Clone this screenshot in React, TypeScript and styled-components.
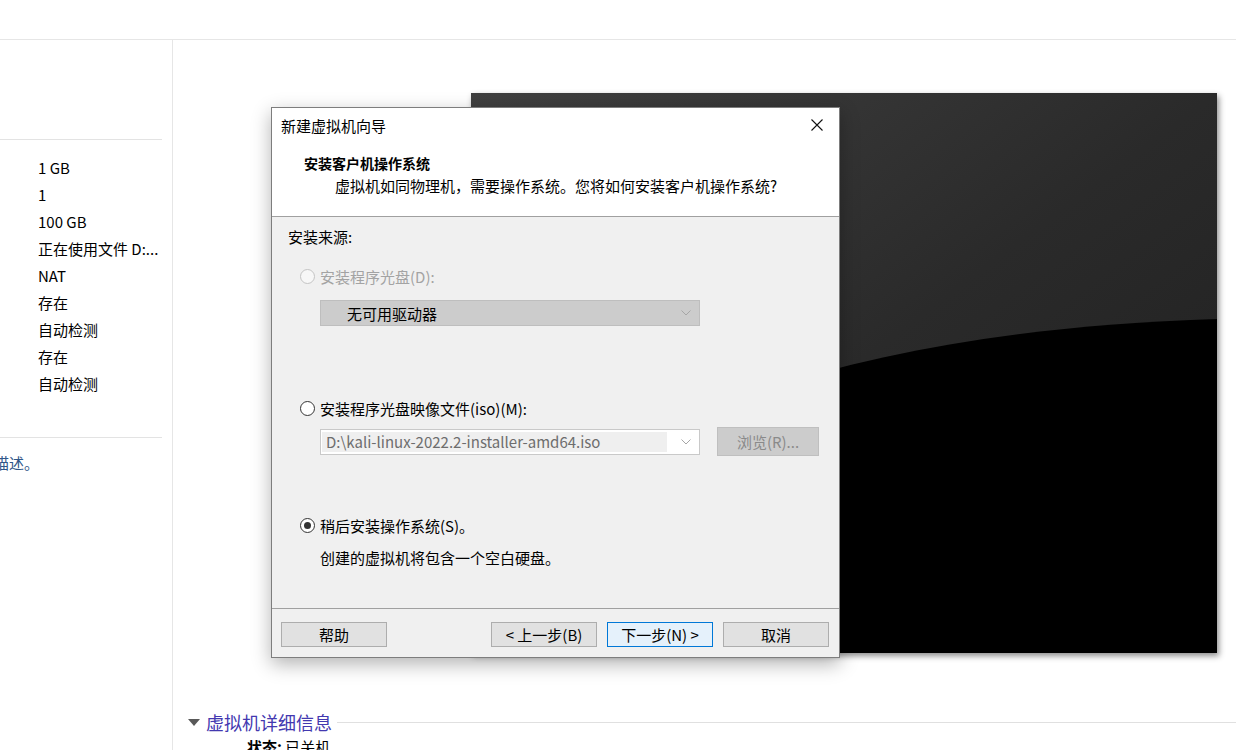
import styled, { createGlobalStyle } from 'styled-components';

const GlobalStyle = createGlobalStyle`
    html, body {
        margin: 0;
        padding: 0;
        background: #ffffff;
        overflow: hidden;
    }
    body {
        width: 1236px;
        height: 750px;
        font-family: "Noto Sans CJK SC", "Noto Sans", sans-serif;
        font-size: 15px;
        color: #000;
    }
`;

const summaryValues = [
    '1 GB',
    '1',
    '100 GB',
    '正在使用文件 D:...',
    'NAT',
    '存在',
    '自动检测',
    '存在',
    '自动检测',
];

function App() {
    return (
        <>
            <GlobalStyle />
            <Page>
                <TopBar />
                <Content>
                    <SidePanel>
                        <SideRule />
                        <ValueList>
                            {summaryValues.map((v, i) => (
                                <ValueRow key={i}>{v}</ValueRow>
                            ))}
                        </ValueList>
                        <SideRule />
                        <Hint>描述。</Hint>
                    </SidePanel>

                    <Main>
                        <Preview>
                            <PreviewArt />
                        </Preview>

                        <Details>
                            <DetailsHead>
                                <Caret viewBox="0 0 12 7">
                                    <polygon points="0,0 12,0 6,7" fill="#595959" />
                                </Caret>
                                <DetailsTitle>虚拟机详细信息</DetailsTitle>
                                <HeadLine />
                            </DetailsHead>
                            <StatusRow>
                                <b>状态:</b> 已关机
                            </StatusRow>
                        </Details>

                        <Dialog>
                            <TitleBar>
                                <span>新建虚拟机向导</span>
                                <CloseIcon viewBox="0 0 12 12">
                                    <path d="M0.5 0.5 L11.5 11.5 M11.5 0.5 L0.5 11.5" stroke="#111" strokeWidth="1.1" />
                                </CloseIcon>
                            </TitleBar>
                            <Header>
                                <HeaderTitle>安装客户机操作系统</HeaderTitle>
                                <HeaderText>虚拟机如同物理机，需要操作系统。您将如何安装客户机操作系统?</HeaderText>
                            </Header>

                            <Body>
                                <SourceLabel>安装来源:</SourceLabel>

                                <RadioRow $gap={19} $disabled>
                                    <Radio $disabled />
                                    安装程序光盘(D):
                                </RadioRow>
                                <ComboRow $gap={14}>
                                    <Combo $disabled>
                                        <ComboText $disabled>无可用驱动器</ComboText>
                                        <Chevron />
                                    </Combo>
                                </ComboRow>

                                <RadioRow $gap={72}>
                                    <Radio />
                                    安装程序光盘映像文件(iso)(M):
                                </RadioRow>
                                <ComboRow $gap={9}>
                                    <Combo>
                                        <ComboText>D:\kali-linux-2022.2-installer-amd64.iso</ComboText>
                                        <Chevron />
                                    </Combo>
                                    <BrowseButton>浏览(R)...</BrowseButton>
                                </ComboRow>

                                <RadioRow $gap={59}>
                                    <Radio $checked />
                                    稍后安装操作系统(S)。
                                </RadioRow>
                                <Note>创建的虚拟机将包含一个空白硬盘。</Note>
                            </Body>

                            <Footer>
                                <Button>帮助</Button>
                                <Spacer />
                                <Button>&lt; 上一步(B)</Button>
                                <Button $primary>下一步(N) &gt;</Button>
                                <Button>取消</Button>
                            </Footer>
                        </Dialog>
                    </Main>
                </Content>
            </Page>
        </>
    );
}

function PreviewArt() {
    return (
        <PreviewSvg viewBox="0 0 746 560" preserveAspectRatio="none">
            <defs>
                <linearGradient id="screen" x1="0" y1="0" x2="1" y2="1">
                    <stop offset="0" stopColor="#404040" />
                    <stop offset="0.5" stopColor="#2a2a2a" />
                    <stop offset="1" stopColor="#1e1e1e" />
                </linearGradient>
            </defs>
            <rect width="746" height="560" fill="url(#screen)" />
            <path d="M0 455 C 170 310 420 236 746 226 L746 560 L0 560 Z" fill="#000" />
        </PreviewSvg>
    );
}

function Chevron() {
    return (
        <ChevronSvg viewBox="0 0 10 6">
            <polyline points="0.5,0.5 5,5 9.5,0.5" fill="none" stroke="#a6a6a6" strokeWidth="1" />
        </ChevronSvg>
    );
}

const Page = styled.div`
    width: 1236px;
    height: 750px;
    display: flex;
    flex-direction: column;
    overflow: hidden;
`;

const TopBar = styled.div`
    height: 39px;
    flex-shrink: 0;
    border-bottom: 1px solid #e6e6e6;
`;

const Content = styled.div`
    flex: 1;
    display: flex;
    min-height: 0;
`;

const SidePanel = styled.aside`
    width: 173px;
    flex-shrink: 0;
    box-sizing: border-box;
    border-right: 1px solid #e6e6e6;
    padding-top: 99px;
`;

const SideRule = styled.div`
    height: 1px;
    width: 162px;
    background: #e3e3e3;
`;

const ValueList = styled.div`
    padding: 14px 0 40px 38px;
`;

const ValueRow = styled.div`
    height: 27px;
    line-height: 27px;
    font-size: 15px;
    white-space: nowrap;
    overflow: hidden;
`;

const Hint = styled.div`
    margin-top: 15px;
    margin-left: -6px;
    font-size: 15px;
    line-height: 20px;
    color: #2f5688;
    white-space: nowrap;
`;

const Main = styled.main`
    flex: 1;
    position: relative;
    padding-top: 53px;
    display: flex;
    flex-direction: column;
`;

const Preview = styled.div`
    margin-left: 298px;
    width: 746px;
    height: 560px;
    flex-shrink: 0;
    box-shadow: 2px 3px 6px rgba(0, 0, 0, 0.45);
`;

const PreviewSvg = styled.svg`
    display: block;
    width: 100%;
    height: 100%;
`;

const Details = styled.section`
    margin-top: 57px;
    padding-left: 15px;
`;

const DetailsHead = styled.div`
    display: flex;
    align-items: center;
    height: 24px;
`;

const Caret = styled.svg`
    width: 12px;
    height: 7px;
    margin-right: 6px;
`;

const DetailsTitle = styled.div`
    font-size: 18px;
    line-height: 24px;
    color: #4338b0;
    white-space: nowrap;
`;

const HeadLine = styled.div`
    flex: 1;
    height: 1px;
    background: #e0e0e0;
    margin-left: 5px;
`;

const StatusRow = styled.div`
    padding-left: 59px;
    margin-top: 2px;
    font-size: 15px;
    line-height: 22px;
`;

const Dialog = styled.div`
    position: absolute;
    left: 98px;
    top: 67px;
    width: 569px;
    height: 551px;
    box-sizing: border-box;
    border: 1px solid #7d7d7d;
    background: #f0f0f0;
    display: flex;
    flex-direction: column;
    box-shadow: 0 6px 18px rgba(0, 0, 0, 0.3);
`;

const TitleBar = styled.div`
    height: 38px;
    flex-shrink: 0;
    box-sizing: border-box;
    background: #fff;
    display: flex;
    align-items: center;
    justify-content: space-between;
    padding: 0 16px 4px 9px;
    font-size: 15px;
`;

const CloseIcon = styled.svg`
    width: 12px;
    height: 12px;
`;

const Header = styled.div`
    height: 71px;
    flex-shrink: 0;
    box-sizing: border-box;
    background: #fff;
    border-bottom: 1px solid #a0a0a0;
    padding-top: 7px;
`;

const HeaderTitle = styled.div`
    padding-left: 32px;
    font-size: 14px;
    font-weight: 700;
    line-height: 20px;
`;

const HeaderText = styled.div`
    padding-left: 63px;
    margin-top: 3px;
    font-size: 15px;
    line-height: 20px;
    white-space: nowrap;
`;

const Body = styled.div`
    flex: 1;
    padding: 10px 0 0 16px;
    display: flex;
    flex-direction: column;
`;

const SourceLabel = styled.div`
    font-size: 15px;
    line-height: 20px;
`;

const RadioRow = styled.div<{ $gap: number; $disabled?: boolean }>`
    display: flex;
    align-items: center;
    height: 20px;
    margin-top: ${(p) => p.$gap}px;
    padding-left: 12px;
    gap: 5px;
    font-size: 15px;
    color: ${(p) => (p.$disabled ? '#a3a3a3' : '#000')};
    white-space: nowrap;
`;

const Radio = styled.span<{ $disabled?: boolean; $checked?: boolean }>`
    width: 15px;
    height: 15px;
    box-sizing: border-box;
    border-radius: 50%;
    border: 1px solid ${(p) => (p.$disabled ? '#c4c4c4' : '#333')};
    background: ${(p) => (p.$disabled ? '#f7f7f7' : '#fff')};
    display: flex;
    align-items: center;
    justify-content: center;
    flex-shrink: 0;

    &::after {
        content: '';
        width: 7px;
        height: 7px;
        border-radius: 50%;
        background: ${(p) => (p.$checked ? '#333' : 'transparent')};
    }
`;

const ComboRow = styled.div<{ $gap: number }>`
    display: flex;
    align-items: center;
    gap: 17px;
    margin-top: ${(p) => p.$gap}px;
    padding-left: 32px;
`;

const Combo = styled.div<{ $disabled?: boolean }>`
    width: 380px;
    height: 26px;
    box-sizing: border-box;
    border: 1px solid ${(p) => (p.$disabled ? '#bebebe' : '#c9c9c9')};
    background: ${(p) => (p.$disabled ? '#cccccc' : '#fff')};
    display: flex;
    align-items: center;
    padding: 2px 8px 2px ${(p) => (p.$disabled ? '26px' : '1px')};
`;

const ComboText = styled.div<{ $disabled?: boolean }>`
    flex: 1;
    align-self: stretch;
    display: flex;
    align-items: center;
    padding-left: ${(p) => (p.$disabled ? '0' : '4px')};
    margin-right: ${(p) => (p.$disabled ? '0' : '14px')};
    background: ${(p) => (p.$disabled ? 'transparent' : '#efefef')};
    color: ${(p) => (p.$disabled ? '#000' : '#6d6d6d')};
    font-size: 15px;
    white-space: nowrap;
`;

const ChevronSvg = styled.svg`
    width: 10px;
    height: 6px;
    flex-shrink: 0;
`;

const BrowseButton = styled.div`
    width: 102px;
    height: 29px;
    box-sizing: border-box;
    border: 1px solid #bfbfbf;
    background: #cccccc;
    color: #8a8a8a;
    font-size: 15px;
    display: flex;
    align-items: center;
    justify-content: center;
`;

const Note = styled.div`
    margin-top: 13px;
    padding-left: 32px;
    font-size: 15px;
    line-height: 20px;
`;

const Footer = styled.div`
    height: 49px;
    flex-shrink: 0;
    box-sizing: border-box;
    border-top: 1px solid #a0a0a0;
    display: flex;
    gap: 10px;
    padding: 13px 10px 0 9px;
`;

const Spacer = styled.div`
    flex: 1;
`;

const Button = styled.div<{ $primary?: boolean }>`
    width: 106px;
    height: 25px;
    box-sizing: border-box;
    border: 1px solid ${(p) => (p.$primary ? '#0078d7' : '#adadad')};
    background: ${(p) => (p.$primary ? '#e5f1fb' : '#e1e1e1')};
    font-size: 15px;
    display: flex;
    align-items: center;
    justify-content: center;
    white-space: nowrap;
`;

export default App;
